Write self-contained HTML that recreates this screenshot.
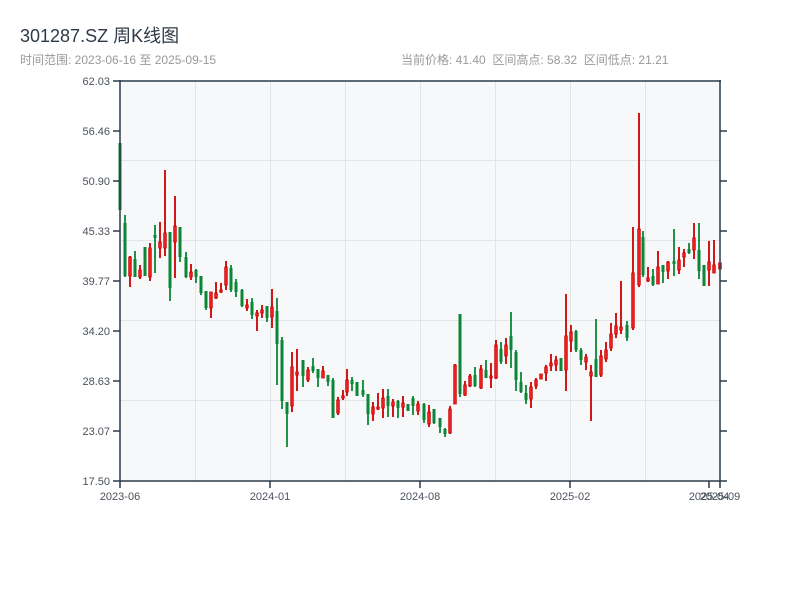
<!DOCTYPE html>
<html><head><meta charset="utf-8"><style>
html,body{margin:0;padding:0;background:#fff;width:800px;height:600px;overflow:hidden;font-family:"Liberation Sans","Noto Sans CJK SC",sans-serif}
.t{position:absolute;left:20px;top:22px;font-size:18px;color:#2f3a47}
.s{position:absolute;left:20px;top:51px;font-size:12px;color:#999}
.r{position:absolute;left:401px;top:51px;font-size:12px;color:#999;white-space:pre}
svg{position:absolute;left:0;top:0}
</style></head><body>
<div class="t">301287.SZ 周K线图</div>
<div class="s">时间范围: 2023-06-16 至 2025-09-15</div>
<div class="r">当前价格: 41.40  区间高点: 58.32  区间低点: 21.21</div>
<svg width="800" height="600" xmlns="http://www.w3.org/2000/svg">
<rect x="120" y="81" width="600" height="400" fill="#f7f8fa"/>
<g stroke="#e1e4e8" stroke-width="1">
<line x1="120" y1="160.5" x2="720" y2="160.5"/><line x1="120" y1="240.5" x2="720" y2="240.5"/>
<line x1="120" y1="320.5" x2="720" y2="320.5"/><line x1="120" y1="400.5" x2="720" y2="400.5"/>
<line x1="195.5" y1="81" x2="195.5" y2="481"/><line x1="270.5" y1="81" x2="270.5" y2="481"/>
<line x1="345.5" y1="81" x2="345.5" y2="481"/><line x1="420.5" y1="81" x2="420.5" y2="481"/>
<line x1="495.5" y1="81" x2="495.5" y2="481"/><line x1="570.5" y1="81" x2="570.5" y2="481"/>
<line x1="645.5" y1="81" x2="645.5" y2="481"/>
</g>
<g id="c"></g>
<g stroke="#2c3a4b" stroke-width="1.5" fill="none">
<line x1="120" y1="81" x2="721" y2="81"/>
<line x1="120" y1="80" x2="120" y2="482"/>
<line x1="720" y1="80" x2="720" y2="482"/>
<line x1="120" y1="481" x2="727" y2="481"/>
<path d="M113 81H120M113 131H120M113 181H120M113 231H120M113 281H120M113 331H120M113 381H120M113 431H120M113 481H120"/>
<path d="M720 131H727M720 181H727M720 231H727M720 281H727M720 331H727M720 381H727M720 431H727"/>
<path d="M120 481V488M270 481V488M420 481V488M570 481V488M709 481V488M720 481V488"/>
</g>
<g font-size="11" fill="#4a525c" text-anchor="end" font-family="Liberation Sans,sans-serif">
<text x="110" y="85">62.03</text><text x="110" y="135">56.46</text><text x="110" y="185">50.90</text>
<text x="110" y="235">45.33</text><text x="110" y="285">39.77</text><text x="110" y="335">34.20</text>
<text x="110" y="385">28.63</text><text x="110" y="435">23.07</text><text x="110" y="485">17.50</text>
</g>
<g font-size="11" fill="#4a525c" text-anchor="middle" font-family="Liberation Sans,sans-serif">
<text x="120" y="500">2023-06</text><text x="270" y="500">2024-01</text><text x="420" y="500">2024-08</text>
<text x="570" y="500">2025-02</text><text x="709" y="500">2025-04</text><text x="720" y="500">2025-09</text>
</g>
</svg>
<script>
var d=[[120,'G',143,210,143,210],[125,'G',215,277,223,276],[130,'R',256,287,257,276],[135,'G',251,277,259,277],[140,'R',265,279,270,277],[145,'G',247,276,247,276],[150,'R',243,281,248,277],[155,'G',225,273,235,238],[160,'R',222,258,242,248],[165,'R',170,256,233,248],[170,'G',232,301,232,288],[175,'R',196,278,226,242],[180,'G',227,262,227,257],[186,'G',252,278,257,277],[191,'R',264,280,272,277],[196,'G',269,283,270,277],[201,'G',276,295,276,293],[206,'G',291,310,291,308],[211,'R',292,318,292,308],[216,'R',282,299,293,298],[221,'R',283,293,290,292],[226,'R',261,290,267,285],[231,'G',265,292,268,290],[236,'G',279,297,282,292],[242,'G',289,307,290,306],[247,'R',299,311,305,308],[252,'G',298,319,302,315],[257,'R',310,331,313,316],[262,'R',305,318,310,313],[267,'G',306,322,306,318],[272,'R',289,328,307,317],[277,'G',298,385,311,344],[282,'G',337,409,340,401],[287,'G',402,447,402,414],[292,'R',352,412,367,406],[297,'R',349,391,372,375],[303,'G',360,387,360,376],[308,'R',367,382,370,380],[313,'G',358,373,366,371],[318,'G',369,387,369,378],[323,'R',366,378,371,378],[328,'G',375,386,375,382],[333,'G',378,418,380,418],[338,'R',397,415,400,413],[343,'R',390,400,396,398],[347,'R',369,396,380,392],[352,'G',377,391,380,384],[357,'G',382,396,382,396],[363,'G',380,397,390,395],[368,'G',394,425,394,414],[373,'R',402,421,407,414],[378,'R',393,410,407,409],[383,'R',389,418,398,408],[388,'G',389,417,396,406],[393,'R',399,417,402,406],[398,'G',400,418,401,408],[403,'R',396,417,403,407],[408,'G',404,411,404,411],[413,'G',396,415,398,406],[418,'R',401,415,404,411],[424,'G',403,423,404,420],[429,'R',405,427,412,424],[434,'G',409,424,409,423],[440,'G',418,433,418,427],[445,'G',428,437,429,434],[450,'R',406,434,409,433],[455,'R',364,404,365,404],[460,'G',314,397,314,394],[465,'R',381,396,385,395],[470,'R',374,387,376,386],[475,'G',367,387,375,386],[481,'R',365,389,369,388],[486,'G',360,378,370,378],[491,'R',363,388,376,378],[496,'R',340,379,345,378],[501,'G',342,364,349,362],[506,'R',338,364,345,356],[511,'G',312,368,336,350],[516,'G',350,391,352,380],[521,'G',372,393,382,392],[526,'G',385,404,393,400],[531,'R',382,408,387,399],[536,'R',378,389,380,386],[541,'R',374,379,374,379],[546,'R',365,381,367,373],[551,'R',354,371,363,366],[556,'R',356,371,360,365],[561,'G',358,371,358,371],[566,'R',294,391,336,370],[571,'R',325,352,332,341],[576,'G',330,352,331,350],[581,'G',348,365,350,360],[586,'R',354,370,357,362],[591,'R',365,421,372,376],[596,'G',319,377,359,377],[601,'R',350,377,356,375],[606,'R',342,362,350,359],[611,'R',323,351,334,348],[616,'R',313,338,326,334],[621,'R',281,334,327,330],[627,'G',321,341,325,338],[633,'R',227,330,273,328],[639,'R',113,287,229,285],[643,'G',231,277,237,275],[648,'R',267,282,278,281],[653,'G',269,286,276,285],[658,'R',251,284,267,284],[663,'G',265,283,265,272],[668,'R',261,279,262,271],[674,'G',229,276,261,264],[679,'R',247,274,260,270],[684,'R',249,267,253,257],[689,'G',243,254,249,253],[694,'R',223,259,238,250],[699,'G',223,279,250,271],[704,'G',265,286,265,286],[709,'R',241,286,262,270],[714,'R',240,273,265,273],[720,'R',263,269,263,269]];
var h='';d.forEach(function(c){var x=c[0],g=c[1]=='G',col=g?'#0a8636':'#cc0000';
h+='<rect x="'+(x-0.9)+'" y="'+c[2]+'" width="1.8" height="'+(c[3]-c[2])+'" fill="'+col+'"/>';
var bh=Math.max(2,c[5]-c[4]);
if(g)h+='<rect x="'+(x-1.5)+'" y="'+c[4]+'" width="3" height="'+bh+'" fill="'+col+'"/>';
else h+='<rect x="'+(x-1.3)+'" y="'+c[4]+'" width="2.6" height="'+bh+'" fill="#ee2222" stroke="#cc0000" stroke-width="0.8"/>';});
document.getElementById('c').innerHTML=h;
</script>
</body></html>
